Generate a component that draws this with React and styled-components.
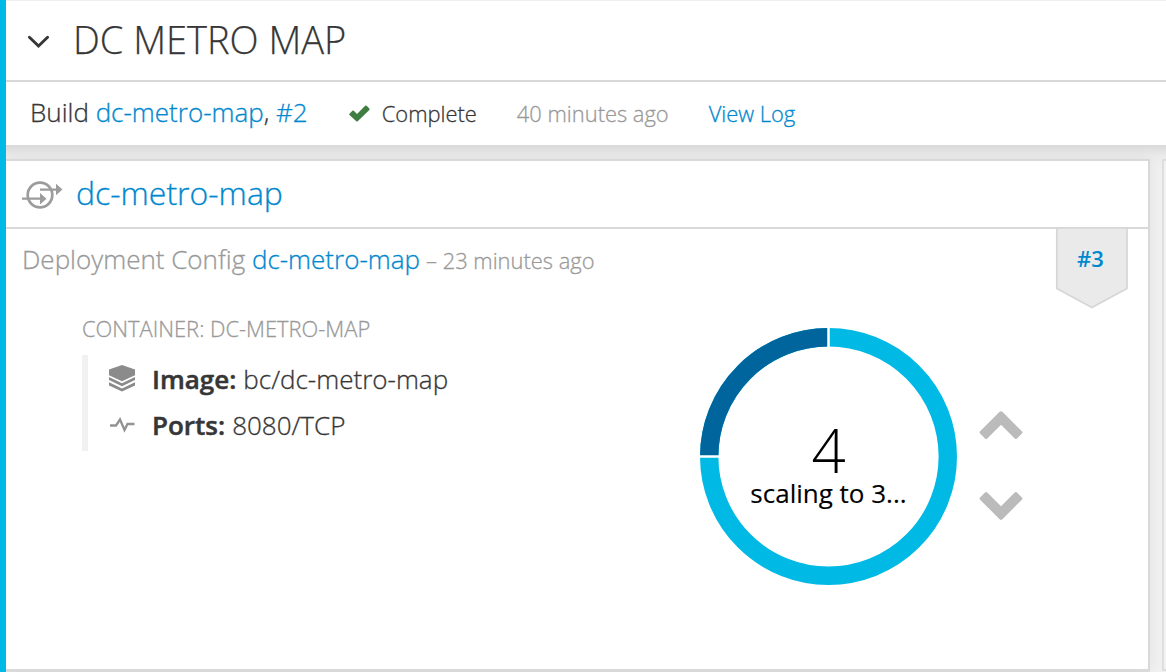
import React from "react";
import styled, { createGlobalStyle } from "styled-components";

const GlobalStyle = createGlobalStyle`
  * { box-sizing: border-box; }
  body {
    margin: 0;
    background: #f0f0f0;
    color: #363636;
    font-family: "Open Sans", "Noto Sans", sans-serif;
    font-weight: 300;
    -webkit-text-stroke: 0.3px;
  }
  h1, h2, h3, p, dl, dt, dd { margin: 0; font-weight: 300; }
`;

const Page = styled.div`
  height: 672px;
  overflow: hidden;
  display: flex;
  flex-direction: column;
  border-left: 6px solid #00b9e4;
`;

const TitleBar = styled.header`
  flex: none;
  height: 82px;
  display: flex;
  align-items: center;
  gap: 22px;
  padding: 0 22px 2px 21px;
  background: #fff;
  border-top: 1px solid #eeeeee;
  border-bottom: 2px solid #d8d8d8;
`;

const Title = styled.h1`
  padding-bottom: 2px;
  font-size: 38px;
  line-height: 52px;
  white-space: nowrap;
  -webkit-text-stroke: 0.25px;
`;

const TitleChevron = styled.svg`
  flex: none;
  margin-top: 4px;
`;

const BuildBar = styled.section`
  flex: none;
  height: 63px;
  display: flex;
  align-items: baseline;
  padding: 12px 24px 0;
  background: #fff;
  white-space: nowrap;
`;

const Link = styled.a`
  color: #0088ce;
  font-weight: ${(p) => p.$weight || 300};
  text-decoration: none;
`;

const Text = styled.span`
  font-size: ${(p) => p.$size}px;
  line-height: 36px;
  color: ${(p) => (p.$muted ? "#999" : "inherit")};
  margin-left: ${(p) => p.$gap || 0}px;
`;

const Icon = styled.svg`
  flex: none;
  display: block;
  overflow: visible;
`;

const StatusIcon = styled(Icon)`
  margin-left: 41px;
`;

const Columns = styled.main`
  flex: 1;
  display: flex;
  gap: 12px;
  padding-top: 14px;
  background: linear-gradient(#d9d9d9, #ebebeb 11px, #f0f0f0 24px);
`;

const Card = styled.article`
  width: 1144px;
  height: 512px;
  flex: none;
  display: flex;
  flex-direction: column;
  background: #fff;
  border: 2px solid #d9d9d9;
  border-left: 0;
  box-shadow: 0 0 12px rgba(0, 0, 0, 0.06), 0 2px 0 #e0e0e0;
`;

const NextCard = styled.div`
  flex: none;
  width: 20px;
  height: 512px;
  background: #f2f2f2;
  border: 2px solid #dedede;
`;

const CardHeader = styled.header`
  height: 68px;
  display: flex;
  align-items: center;
  gap: 13px;
  padding: 0 16px;
  border-bottom: 2px solid #d9d9d9;
`;

const ServiceIcon = styled(Icon)`
  margin-top: 2px;
`;

const ServiceName = styled.h2`
  padding-bottom: 2px;
  font-size: 32px;
  line-height: 44px;
`;

const CardBody = styled.div`
  flex: 1;
  display: flex;
  padding-left: 16px;
`;

const Details = styled.div`
  width: 678px;
  white-space: nowrap;
`;

const DeploymentLine = styled.p`
  padding-top: 12px;
`;

const Container = styled.section`
  padding: 35px 0 0 60px;
`;

const ContainerTitle = styled.h3`
  font-size: 21.9px;
  line-height: 30px;
  color: #999;
  text-transform: uppercase;
`;

const Facts = styled.dl`
  height: 96px;
  margin-top: 11px;
  padding: 1px 0 0 21px;
  border-left: 6px solid #f1f1f1;
`;

const Fact = styled.div`
  height: 46px;
  display: flex;
  align-items: center;
  font-size: 26px;

  svg { margin-bottom: ${(p) => p.$lift || 0}px; }
  dt { margin-left: 16px; font-weight: 600; -webkit-text-stroke: 0.5px; }
  dd { margin-left: 7px; }
`;

const Scaling = styled.div`
  display: flex;
  align-items: flex-start;
  gap: 22px;
  padding-top: 99px;
`;

const Donut = styled.div`
  display: grid;
  width: 257px;
  height: 257px;

  > * { grid-area: 1 / 1; }
`;

const DonutLabel = styled.div`
  display: flex;
  flex-direction: column;
  align-items: center;
  padding-top: 97px;
  color: #000;
`;

const Count = styled.strong`
  font-size: 60px;
  line-height: 50px;
  font-weight: 300;
  -webkit-text-stroke: 0;
`;

const ScaleNote = styled.span`
  font-size: 26px;
  line-height: 36px;
  font-weight: 400;
  white-space: nowrap;
  -webkit-text-stroke: 0.15px;
`;

const Stepper = styled.div`
  display: flex;
  flex-direction: column;
  gap: 53px;
  padding-top: 83px;
`;

const StepButton = styled.button`
  display: block;
  padding: 0;
  border: 0;
  background: none;
`;

const Ribbon = styled.div`
  position: relative;
  width: 73px;
  height: 82px;
  margin: -2px 0 0 32px;
  display: grid;

  > * { grid-area: 1 / 1; }
`;

const RibbonText = styled.span`
  justify-self: center;
  padding: 15px 2px 0 0;
  font-size: 22px;
  line-height: 32px;
  -webkit-text-stroke: 0;
`;

const Chevron = ({ down }) => (
  <Icon width="44" height="28" viewBox="0 0 44 28">
    <path
      transform={down ? "matrix(1 0 0 -1 0 28)" : undefined}
      d="M20.6.8q1.4-1.2 2.8 0L42.9 20.3q1.1 1.2 0 2.3L38 27.4q-1.1 1-2.3 0L22 13.8 8.3 27.4q-1.2 1-2.3 0L1.1 22.6q-1.1-1.1 0-2.3Z"
      fill="#bbb"
    />
  </Icon>
);

export default function App() {
  return (
    <>
      <GlobalStyle />
      <Page>
        <TitleBar>
          <TitleChevron width="24" height="14" viewBox="0 0 24 14">
            <path d="M2.4 2.2 11.5 11 20.6 2.2" fill="none" stroke="#363636" strokeWidth="2.9" strokeLinecap="round" />
          </TitleChevron>
          <Title>DC METRO MAP</Title>
        </TitleBar>
        <BuildBar>
          <Text $size={26}>
            Build <Link>dc-metro-map</Link>, <Link>#2</Link>
          </Text>
          <StatusIcon width="21" height="17" viewBox="0 0 21 17">
            <path d="M.5 8.7 3.4 5.8q.7-.6 1.4 0L8 9 16.2.8q.7-.6 1.4 0l2.7 2.7q.7.7 0 1.4L8.700 16.200q-.7.7-1.400 0L.5 10.100q-.7-.7 0-1.400Z" fill="#3f7d40" />
          </StatusIcon>
          <Text $size={21.9} $gap={12}>Complete</Text>
          <Text $size={21.9} $gap={40} $muted>40 minutes ago</Text>
          <Text $size={21.9} $gap={40}><Link>View Log</Link></Text>
        </BuildBar>
        <Columns>
          <Card>
            <CardHeader>
              <ServiceIcon width="41" height="28" viewBox="0 0 41 28">
                <circle cx="18" cy="14" r="12.3" fill="none" stroke="#9c9c9c" strokeWidth="2.7" />
                <path d="M18 8.6H35M0 17.7H19" stroke="#9c9c9c" strokeWidth="2.2" />
                <path d="M34 2.7 40.5 8.6 34 14.3ZM18 12 24.5 17.7 18 23.4Z" fill="#9c9c9c" />
              </ServiceIcon>
              <ServiceName><Link>dc-metro-map</Link></ServiceName>
            </CardHeader>
            <CardBody>
              <Details>
                <DeploymentLine>
                  <Text $size={26} $muted>
                    Deployment Config <Link>dc-metro-map</Link>
                  </Text>
                  <Text $size={21.9} $gap={6} $muted>– 23 minutes ago</Text>
                </DeploymentLine>
                <Container>
                  <ContainerTitle>Container: dc-metro-map</ContainerTitle>
                  <Facts>
                    <Fact $lift={2}>
                      <Icon width="27" height="27" viewBox="0 0 27 27">
                        <path d="M13 0 26 4.5V10.2L13 16.2 0 10.2V4.5Z" fill="#8b8b8b" />
                        <path d="M0 12 13 18.2 26 12V15L13 21.3 0 15ZM0 17.3 13 23.5 26 17.3V20.6L13 26.5 0 20.6Z" fill="#8b8b8b" />
                      </Icon>
                      <dt>Image:</dt>
                      <dd>bc/dc-metro-map</dd>
                    </Fact>
                    <Fact>
                      <Icon width="27" height="14" viewBox="0 0 27 14">
                        <path d="M1 7.5H7L11 1.5 15.5 12 18.5 6H25.5" fill="none" stroke="#939393" strokeWidth="2.3" />
                      </Icon>
                      <dt>Ports:</dt>
                      <dd>8080/TCP</dd>
                    </Fact>
                  </Facts>
                </Container>
              </Details>
              <Scaling>
                <Donut>
                  <Icon width="257" height="257" viewBox="0 0 257 257">
                    <circle cx="128.5" cy="128.5" r="119.3" fill="none" stroke="#00b9e4" strokeWidth="18.4" />
                    <path d="M9.2 128.5A119.3 119.3 0 0 1 128.5 9.2" fill="none" stroke="#00659c" strokeWidth="18.4" />
                    <path d="M128.5 0V20M0 128.5H20" stroke="#fff" strokeWidth="2.5" />
                  </Icon>
                  <DonutLabel>
                    <Count>4</Count>
                    <ScaleNote>scaling to 3...</ScaleNote>
                  </DonutLabel>
                </Donut>
                <Stepper>
                  <StepButton aria-label="Scale up"><Chevron /></StepButton>
                  <StepButton aria-label="Scale down"><Chevron down /></StepButton>
                </Stepper>
              </Scaling>
              <Ribbon>
                <Icon width="73" height="82" viewBox="0 0 73 82">
                  <path d="M1.8 1H72V61.5L36.9 80.5 1.8 61.5Z" fill="#eaeaea" stroke="#d6d6d6" strokeWidth="1.7" />
                </Icon>
                <RibbonText><Link $weight={600}>#3</Link></RibbonText>
              </Ribbon>
            </CardBody>
          </Card>
          <NextCard />
        </Columns>
      </Page>
    </>
  );
}
